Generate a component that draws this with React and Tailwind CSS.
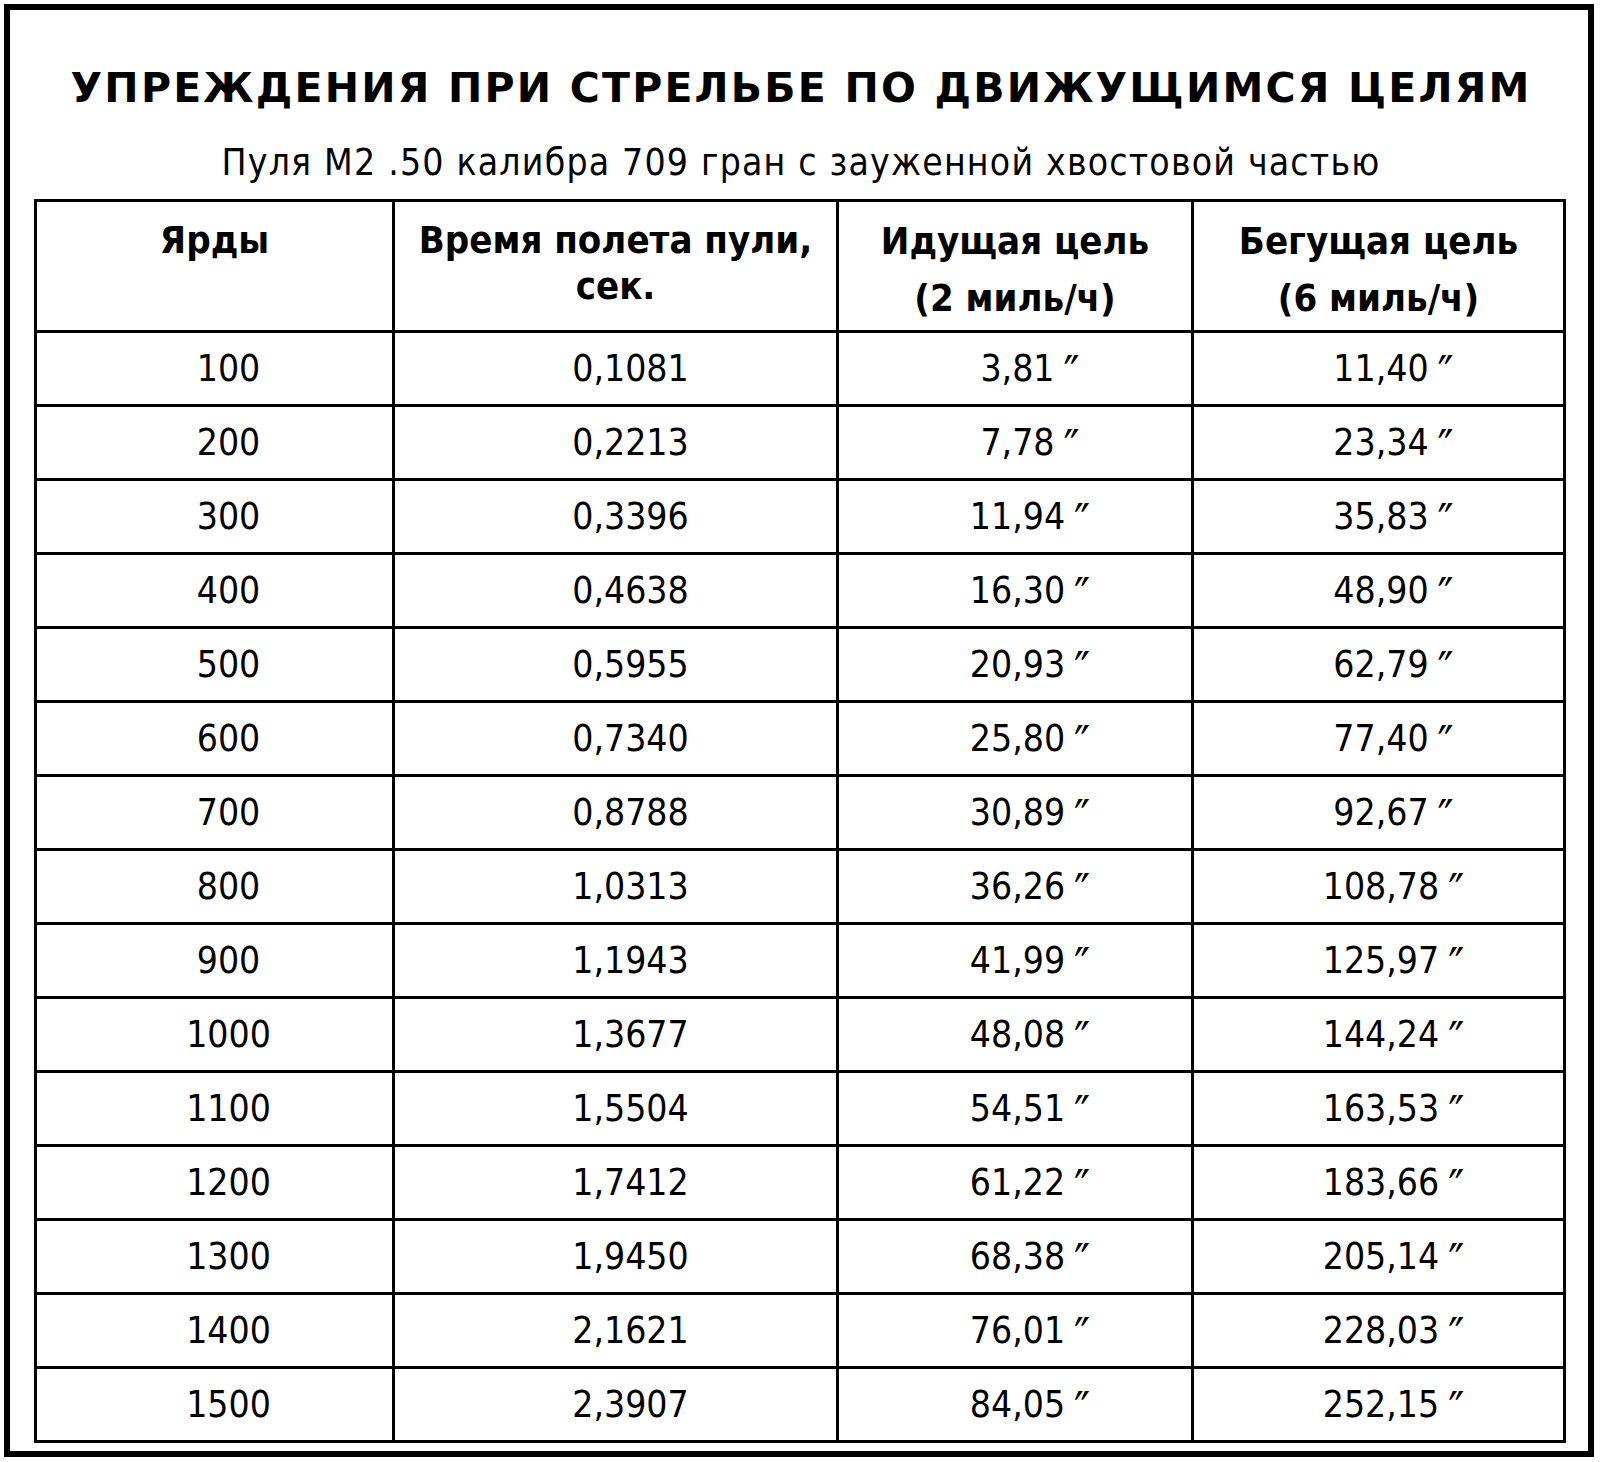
import React from "react";

const rows = [
  ["100", "0,1081", "3,81", "11,40"],
  ["200", "0,2213", "7,78", "23,34"],
  ["300", "0,3396", "11,94", "35,83"],
  ["400", "0,4638", "16,30", "48,90"],
  ["500", "0,5955", "20,93", "62,79"],
  ["600", "0,7340", "25,80", "77,40"],
  ["700", "0,8788", "30,89", "92,67"],
  ["800", "1,0313", "36,26", "108,78"],
  ["900", "1,1943", "41,99", "125,97"],
  ["1000", "1,3677", "48,08", "144,24"],
  ["1100", "1,5504", "54,51", "163,53"],
  ["1200", "1,7412", "61,22", "183,66"],
  ["1300", "1,9450", "68,38", "205,14"],
  ["1400", "2,1621", "76,01", "228,03"],
  ["1500", "2,3907", "84,05", "252,15"],
];

const font = { fontFamily: '"DejaVu Sans Condensed", "DejaVu Sans", sans-serif' };
const wide = { fontFamily: '"DejaVu Sans", sans-serif' };

const Inch = ({ v }) => (
  <span>
    {v}
    <span className="relative top-[9px] ml-[9px] text-[48px] leading-none font-light">″</span>
  </span>
);

export default function App() {
  return (
    <div className="w-[1600px] h-[1462px] bg-white pt-[4px] pl-[4px]" style={font}>
      <div className="w-[1590px] h-[1453px] border-[6px] border-black pl-[24px] pt-[50px] text-black">
        <h1
          className="text-[41px] leading-[56px] font-bold text-center pr-[20px] tracking-[2.2px]"
          style={wide}
        >
          УПРЕЖДЕНИЯ ПРИ СТРЕЛЬБЕ ПО ДВИЖУЩИМСЯ ЦЕЛЯМ
        </h1>
        <p className="text-[37px] leading-[44px] text-center pr-[20px] mt-[25px] tracking-[1.2px]">
          Пуля M2 .50 калибра 709 гран с зауженной хвостовой частью
        </p>
        <table className="mt-[14px] w-[1532px] table-fixed border-collapse border-[3px] border-black">
          <colgroup>
            <col className="w-[358px]" />
            <col className="w-[444px]" />
            <col className="w-[355px]" />
            <col />
          </colgroup>
          <thead>
            <tr className="h-[131px]">
              <th className="border-[3px] border-black align-top pt-[15px] text-[38px] font-bold leading-[46px]">
                Ярды
              </th>
              <th className="border-[3px] border-black align-top pt-[15px] text-[38px] font-bold leading-[46px]">
                Время полета пули,
                <br />
                сек.
              </th>
              <th className="border-[3px] border-black align-top pt-[11px] text-[38px] font-bold leading-[57px]">
                Идущая цель
                <br />
                (2 миль/ч)
              </th>
              <th className="border-[3px] border-black align-top pt-[11px] text-[38px] font-bold leading-[57px]">
                Бегущая цель
                <br />
                (6 миль/ч)
              </th>
            </tr>
          </thead>
          <tbody>
            {rows.map((r) => (
              <tr key={r[0]} className="h-[74px] text-[37px]">
                <td className="border-[3px] border-black text-center pl-[28px]">{r[0]}</td>
                <td className="border-[3px] border-black text-center pl-[30px]">{r[1]}</td>
                <td className="border-[3px] border-black text-center pl-[30px]">
                  <Inch v={r[2]} />
                </td>
                <td className="border-[3px] border-black text-center pl-[30px]">
                  <Inch v={r[3]} />
                </td>
              </tr>
            ))}
          </tbody>
        </table>
      </div>
    </div>
  );
}
